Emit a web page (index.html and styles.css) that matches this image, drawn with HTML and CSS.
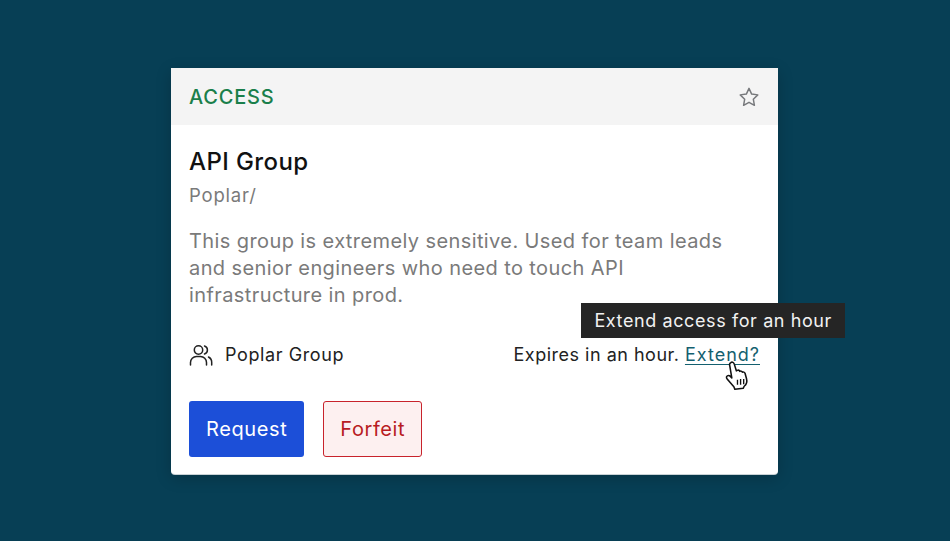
FILE: index.html
```html
<!DOCTYPE html>
<html lang="en">
<head>
    <meta charset="UTF-8" />
    <title>API Group</title>
    <link rel="stylesheet" href="styles.css">
</head>
<body>
    <div class="card">
        <div class="card-head">
            <span class="label">ACCESS</span>
            <svg class="star" width="22" height="22" viewBox="0 0 24 24" fill="none" stroke="#77797c" stroke-width="1.6" stroke-linejoin="round"><path d="M12 2.6l2.9 6.2 6.7.9-4.9 4.7 1.2 6.7-5.9-3.3-5.9 3.3 1.2-6.7-4.9-4.7 6.7-.9z"/></svg>
        </div>
        <div class="card-body">
            <h2>API Group</h2>
            <div class="path">Poplar/</div>
            <p class="desc">This group is extremely sensitive. Used for team leads and senior engineers who need to touch API infrastructure in prod.</p>
            <div class="meta">
                <div class="owner">
                    <svg width="24" height="24" viewBox="0 0 24 24" fill="none" stroke="#222" stroke-width="1.5" stroke-linecap="round"><circle cx="9.500" cy="7" r="4.200"/><path d="M1.500 22v-2.500a6 6 0 0 1 6-6h4a6 6 0 0 1 6 6V22"/><path d="M15.500 3a4.200 4.200 0 0 1 0 8"/><path d="M19.500 14a6 6 0 0 1 3.200 5.500V22"/></svg>
                    <span>Poplar Group</span>
                </div>
                <div class="expires">
                    Expires in an hour. <a href="#">Extend?</a>
                    <div class="tooltip">Extend access for an hour</div>
                    <svg class="cursor" width="28" height="31" viewBox="0 0 26 30"><path d="M6 2.500c1.500-1 3 0 3.400 1.500l2 6.500 1-.5c1-.5 2 0 2.300 1 .8-.6 2-.3 2.500.8.900-.5 2.200-.1 2.600 1.100l1.400 5c.8 3-.2 6-2.200 7.500l-1 2-8 1-1-2.500-6.500-7.500c-1-1.200-.8-2.500.2-3 1-.6 2.200-.2 3.100.7l1.200 1.200L5 5.500c-.4-1.200 0-2.400 1-3z" fill="#fff" stroke="#111" stroke-width="1.500" stroke-linejoin="round"/><path d="M12.500 19v5M15.500 18.500v5.500M18.500 18.500v5" stroke="#111" stroke-width="1.300" fill="none"/></svg>
                </div>
            </div>
            <div class="actions">
                <button class="btn primary">Request</button>
                <button class="btn danger">Forfeit</button>
            </div>
        </div>
    </div>
</body>
</html>
```

FILE: styles.css
```css
body {
    margin: 0;
    height: 541px;
    padding-right: 1px;
    box-sizing: border-box;
    background: #073f55;
    font-family: 'Inter', sans-serif;
    color: #222;
    display: flex;
    align-items: center;
    justify-content: center;
    overflow: hidden;
}
.card {
    width: 607px;
    height: 406px;
    background: #fff;
    border-radius: 0 0 4px 4px;
    box-shadow: 0 1px 0 #c9d2d6, 0 4px 16px rgba(0,0,0,0.2);
}
.card-head {
    height: 56px;
    padding: 1px 18px 0 18px;
    background: #f4f4f4;
    display: flex;
    align-items: center;
    justify-content: space-between;
}
.label {
    color: #1a7f4b;
    font-size: 20px;
    font-weight: 500;
    letter-spacing: 0.8px;
}
.card-body {
    padding: 22px 18px 0 18px;
}
.card-body h2 {
    margin: 0;
    font-size: 24px;
    line-height: 30px;
    font-weight: 450;
    letter-spacing: 0.4px;
    color: #111;
}
.path {
    margin-top: 6px;
    font-size: 18.500px;
    line-height: 24px;
    letter-spacing: 0.8px;
    color: #7a7a7a;
}
.desc {
    margin: 21px 0 0 0;
    font-size: 20px;
    line-height: 27px;
    letter-spacing: 0.4px;
    color: #7a7a7a;
}
.meta {
    margin-top: 34px;
    display: flex;
    align-items: center;
    justify-content: space-between;
    font-size: 18px;
    line-height: 24px;
    letter-spacing: 0.6px;
}
.owner {
    display: flex;
    align-items: center;
    gap: 12px;
}
.expires {
    position: relative;
    letter-spacing: 0.5px;
}
.expires a {
    color: #14606f;
    letter-spacing: 1px;
    text-decoration-thickness: 1px;
    text-underline-offset: 3px;
}
.tooltip {
    position: absolute;
    right: -85px;
    bottom: 29px;
    background: #252525;
    color: #f2f2f2;
    padding: 0 13px;
    line-height: 35px;
    letter-spacing: 0.6px;
    white-space: nowrap;
}
.cursor {
    position: absolute;
    right: 8px;
    top: 17px;
}
.actions {
    margin-top: 34px;
    display: flex;
    gap: 19px;
}
.btn {
    height: 56px;
    padding: 0 16px;
    border-radius: 3px;
    font-family: inherit;
    font-size: 20px;
    letter-spacing: 0.6px;
    border: 1px solid transparent;
}
.primary {
    background: #1c4fd8;
    color: #fff;
}
.danger {
    background: #fdf0f0;
    border-color: #c8232c;
    color: #b81c22;
}
```
